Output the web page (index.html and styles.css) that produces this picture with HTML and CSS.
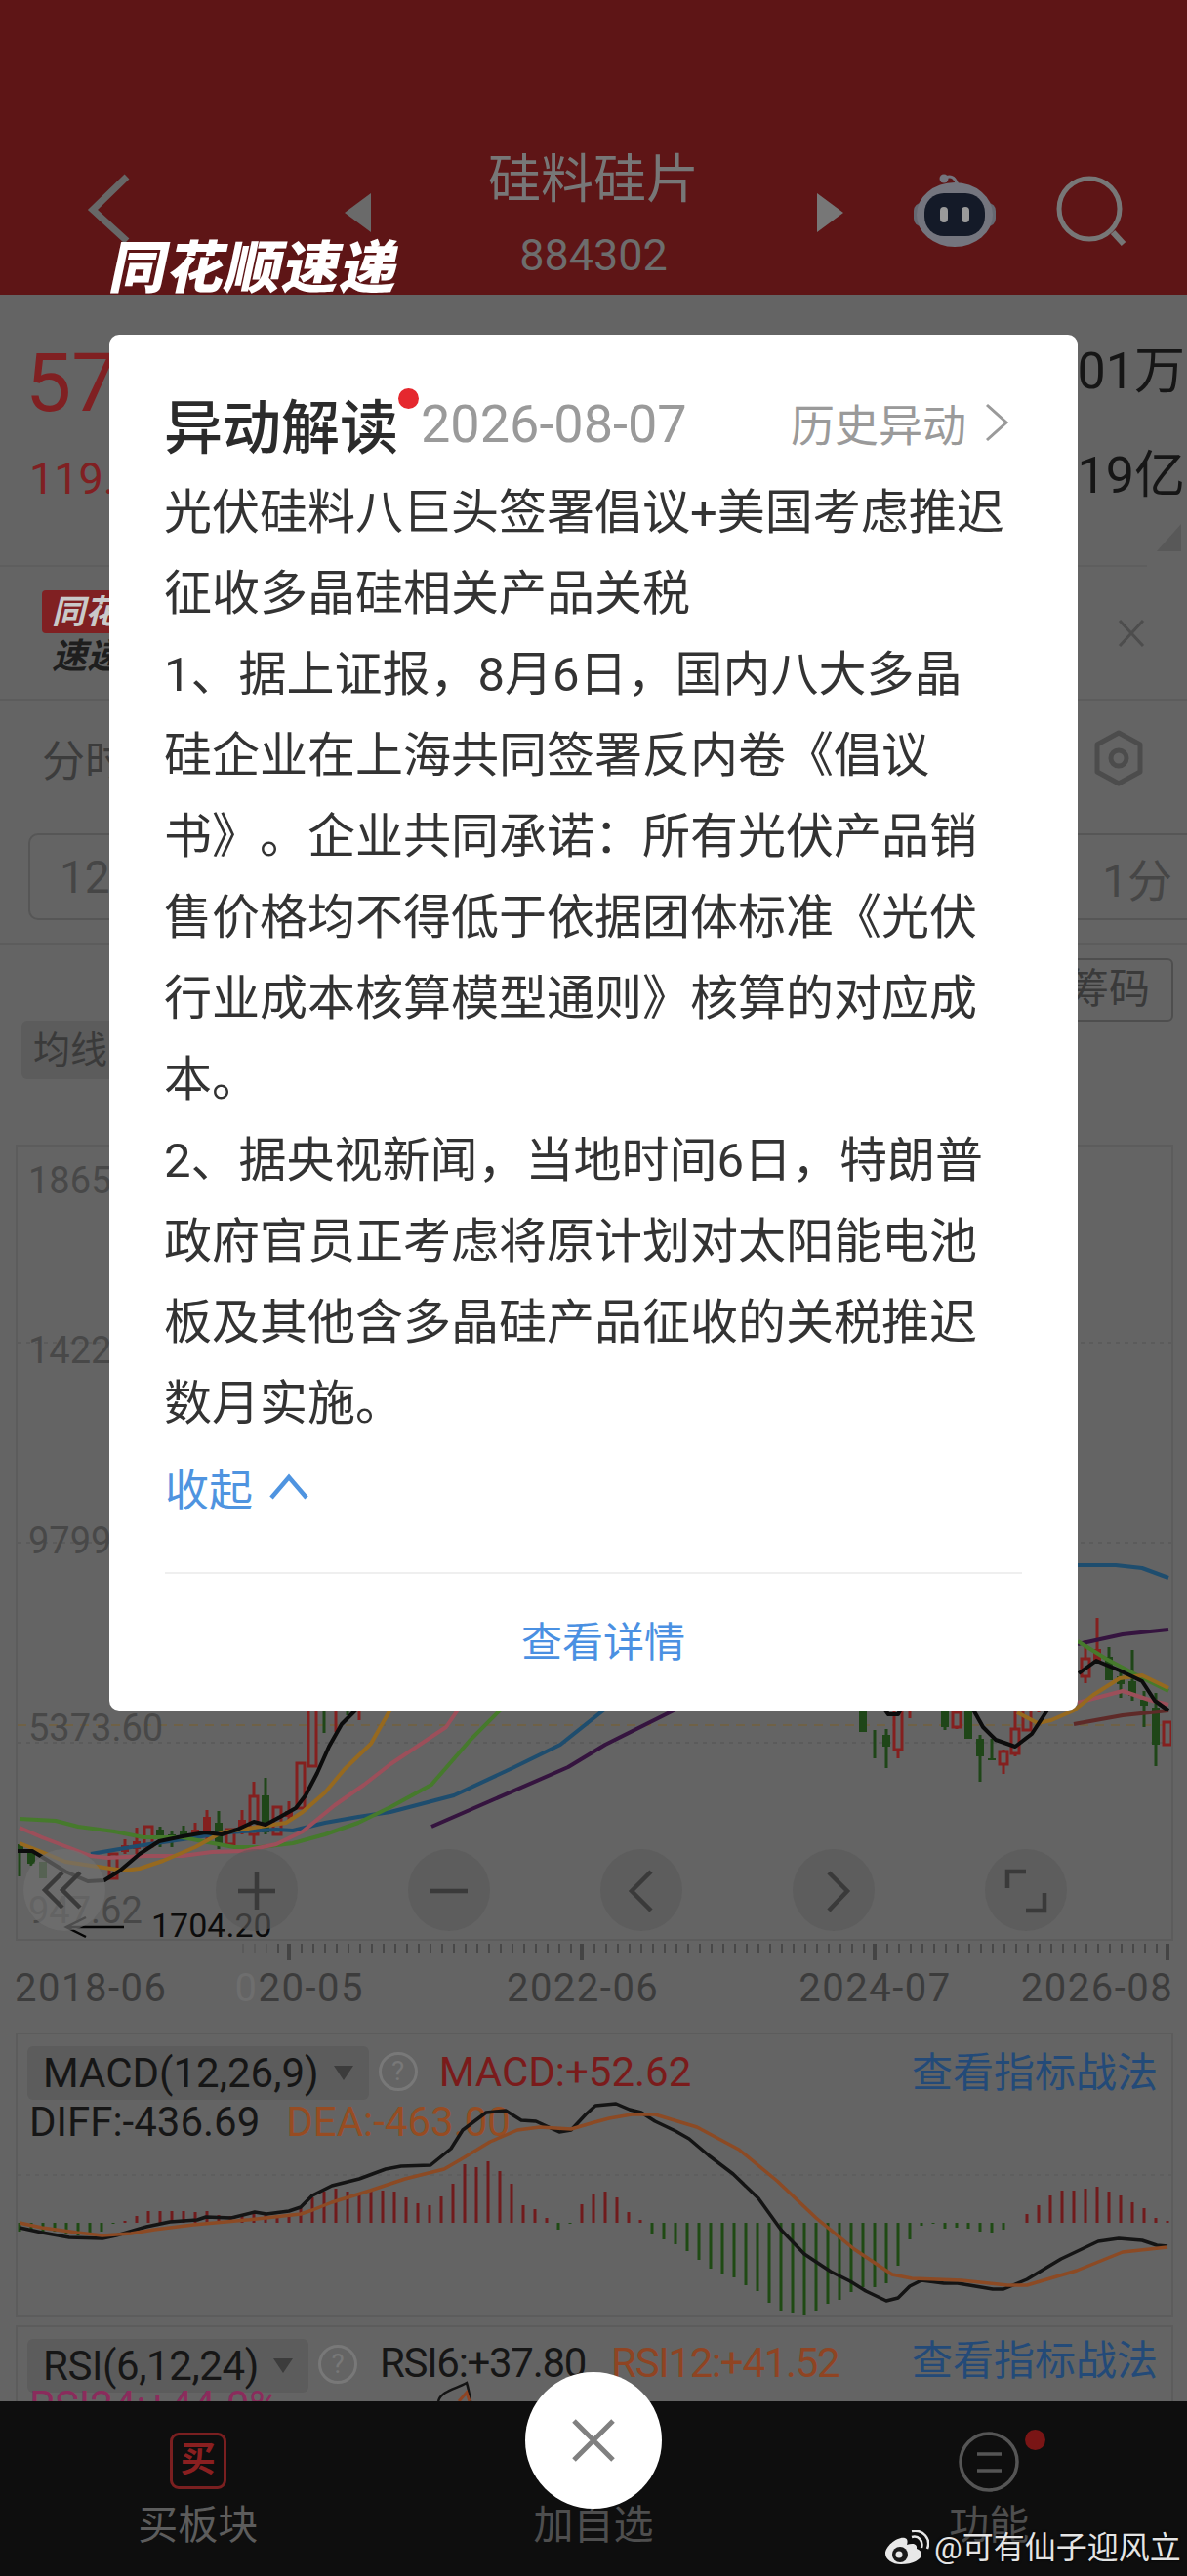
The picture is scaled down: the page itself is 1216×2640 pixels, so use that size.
FILE: index.html
```html
<!DOCTYPE html>
<html lang="zh-CN">
<head>
    <meta charset="UTF-8">
    <meta name="viewport" content="width=device-width, initial-scale=1.0">
    <title>硅料硅片 884302</title>
    <link rel="stylesheet" href="styles.css">
</head>
<body>
<div class="page">
    <!-- 顶部栏 -->
    <div class="top">
        <svg class="back" width="50" height="70" viewBox="0 0 50 70"><path d="M42 3 7 37l35 32" fill="none" stroke="#676767" stroke-width="7"/></svg>
        <svg class="tri" width="30" height="44" viewBox="0 0 30 44"><path d="M0 22 27 2v40z" fill="#6a6a6a"/></svg>
        <div class="stock">
            <div class="stock-name">硅料硅片</div>
            <div class="stock-code">884302</div>
        </div>
        <svg class="tri tri-next" width="30" height="44" viewBox="0 0 30 44"><path d="M2 2 29 22 2 42z" fill="#777"/></svg>
        <svg class="robot" width="90" height="78" viewBox="0 0 90 78">
            <path d="M36 4c6-3 10 1 12 8" fill="none" stroke="#74757e" stroke-width="3"/>
            <circle cx="34" cy="5" r="4.5" fill="#74757e"/>
            <rect x="3" y="30" width="84" height="24" rx="8" fill="#666871"/>
            <ellipse cx="45" cy="42" rx="39" ry="33" fill="#74757e"/>
            <rect x="14" y="20" width="62" height="44" rx="20" fill="#141a28"/>
            <rect x="30" y="34" width="8" height="16" rx="4" fill="#9a9a9a"/>
            <rect x="52" y="34" width="8" height="16" rx="4" fill="#9a9a9a"/>
        </svg>
        <svg class="search" width="78" height="78" viewBox="0 0 78 78"><circle cx="36" cy="36" r="31" fill="none" stroke="#777" stroke-width="5"/><path d="M60 60 71 72" stroke="#777" stroke-width="6"/></svg>
    </div>

    <!-- 行情 -->
    <div class="quote">
        <div class="quote-left">
            <div class="price">57</div>
            <div class="change">119.</div>
        </div>
        <div class="quote-right">
            <div class="vol">01万</div>
            <div class="vol vol-2">19亿</div>
        </div>
        <div class="corner"></div>
    </div>

    <div class="ad">
        <div class="ad-logo">
            <div class="ad-tag">同花</div>
            <div class="ad-sub">速递</div>
        </div>
        <svg width="28" height="30" viewBox="0 0 28 30"><path d="M2 2 26 28M26 2 2 28" stroke="#4d4d4d" stroke-width="3"/></svg>
    </div>

    <div class="tabs">
        <div class="tab">分时</div>
        <svg width="58" height="58" viewBox="0 0 58 58"><path d="M29 3 51 15v28L29 55 7 43V15z" fill="none" stroke="#4c4c4c" stroke-width="5" stroke-linejoin="round"/><circle cx="29" cy="29" r="8" fill="none" stroke="#4c4c4c" stroke-width="5"/></svg>
    </div>

    <div class="period">
        <span class="period-item">12</span>
        <span class="period-item period-last">1分</span>
    </div>

    <div class="tools">
        <div class="chip-ma">均线</div>
        <div class="btn-chip">筹码</div>
    </div>

    <!-- K线 -->
    <div class="chart">
        <svg class="plot" width="1182" height="812" viewBox="18 1175 1182 812">
            <g class="grid">
                <path d="M18 1376H1200M18 1581H1200M18 1786H1200"/>
            </g>
            <path d="M18 1768H1200" class="grid-mid"/>
            <g class="axis-label">
                <text x="29" y="1223">1865</text>
                <text x="29" y="1397">1422</text>
                <text x="29" y="1592">9799</text>
                <text x="29" y="1784">5373.60</text>
                <text x="29" y="1971">947.62</text>
            </g>
            <path class="wick-r" d="M128 1885v15M140 1873v27M200 1868v17M212 1855v30M236 1876v16M248 1855v25M260 1826v64M296 1846v19M344 1745v30M368 1745v18M920 1745v57M932 1745v16M980 1745v27M1028 1793v25M1040 1745v55M1064 1745v10M1112 1681v44M1124 1658v47"/>
            <path class="body-r" d="M124 1891h8v7h-8zM136 1887h8v8h-8zM196 1875h8v8h-8zM208 1862h8v20h-8zM244 1865h8v13h-8zM292 1856h8v6h-8zM1120 1690h8v12h-8z"/>
            <path class="hollow-r" d="M112 1900h8v25h-8zM148 1872h8v20h-8zM232 1875h8v15h-8zM256 1841h8v39h-8zM280 1852h8v28h-8zM304 1807h8v46h-8zM316 1745h8v65h-8zM916 1745h8v48h-8zM976 1755h8v15h-8zM1024 1795h8v13h-8zM1036 1772h8v25h-8zM1048 1745h8v28h-8zM1108 1700h8v18h-8zM1192 1765h8v23h-8z"/>
            <path class="wick-g" d="M20 1890v33M32 1897v15M164 1872v21M176 1877v16M188 1871v14M224 1856v39M272 1822v58M332 1745v31M356 1745v13M896 1773v29M908 1772v40M968 1745v28M1004 1778v48M1016 1782v22M1136 1688v34M1148 1712v28M1160 1691v52M1172 1733v37M1184 1735v75"/>
            <path class="body-g" d="M16 1890h8v7h-8zM28 1897h8v13h-8zM40 1908h8v17h-8zM160 1875h8v7h-8zM172 1880h8v6h-8zM184 1877h8v6h-8zM220 1868h8v22h-8zM268 1840h8v38h-8zM880 1745h8v30h-8zM904 1778h8v12h-8zM964 1745h8v25h-8zM988 1745h8v37h-8zM1000 1782h8v18h-8zM1012 1802h8v2h-8zM1132 1698h8v24h-8zM1144 1718h8v8h-8zM1156 1723h8v15h-8zM1168 1742h8v6h-8zM1180 1750h8v38h-8z"/>
            <g class="lines">
                <path stroke="#35143f" d="M442 1872 582 1811 620 1788 706 1745M1104 1685 1150 1675 1197 1670"/>
                <path stroke="#5e2a28" d="M1100 1767 1150 1758 1197 1753"/>
                <path stroke="#1e4d6e" d="M93 1900 140 1892 187 1885 233 1878 283 1875 300 1876 333 1868 367 1862 400 1857 465 1840 527 1811 574 1788 628 1745M1104 1604 1143 1604 1170 1607 1197 1617"/>
                <path stroke="#467a2c" d="M20 1864 57 1866 80 1872 117 1877 147 1883 187 1883 213 1888 240 1893 267 1893 300 1889 333 1880 367 1868 400 1852 442 1829 481 1784 520 1745M1104 1682 1133 1700 1167 1718 1197 1733"/>
                <path stroke="#9c4f5a" d="M20 1873 43 1883 93 1902 110 1904 150 1902 187 1902 217 1898 250 1897 283 1890 310 1877 343 1850 373 1829 400 1808 457 1770 474 1745M1104 1745 1150 1733 1177 1742 1197 1747"/>
                <path stroke="#96691f" d="M20 1889 43 1898 67 1908 100 1913 127 1917 143 1915 167 1907 200 1893 227 1878 260 1873 293 1868 310 1857 333 1837 353 1813 380 1787 404 1745M1042 1755 1063 1766 1077 1763 1100 1753 1120 1737 1147 1720 1170 1717 1197 1730"/>
                <path stroke="#0c0c0c" d="M18 1897 33 1897 43 1903 67 1918 90 1928 107 1927 123 1917 143 1900 163 1887 187 1882 210 1878 227 1880 243 1875 260 1867 272 1870 287 1862 303 1853 313 1840 325 1817 337 1790 350 1767 372 1745M905 1750 910 1757 920 1757 924 1750M993 1745 1007 1770 1020 1783 1040 1790 1057 1777 1078 1745M1105 1715 1123 1702 1147 1712 1170 1723 1183 1743 1197 1753"/>
            </g>
            <path d="M127 1975H68M88 1965 68 1975 88 1985" fill="none" stroke="#050505" stroke-width="2.5"/>
            <text class="cursor-val" x="155" y="1985">1704.20</text>
            <circle class="ctl ctl-first" cx="66" cy="1937" r="42"/>
            <circle class="ctl" cx="263" cy="1937" r="42"/>
            <circle class="ctl" cx="460" cy="1937" r="42"/>
            <circle class="ctl" cx="657" cy="1937" r="42"/>
            <circle class="ctl" cx="854" cy="1937" r="42"/>
            <circle class="ctl" cx="1051" cy="1937" r="42"/>
            <g class="ctl-icon">
                <path d="M64 1919 46 1937 64 1955M82 1919 64 1937 82 1955"/>
                <path d="M263 1919v38M244 1938h38"/>
                <path d="M441 1938h38"/>
                <path d="M667 1918 647 1938 667 1958"/>
                <path d="M849 1919 868 1938 849 1958"/>
                <path d="M1032 1935v-17h19M1070 1940v18h-19"/>
            </g>
        </svg>
    </div>

    <svg class="ticks" width="1216" height="17" viewBox="0 1992 1216 17">
        <path d="M248 1997H284" stroke="#5a5a5a" stroke-width="10" stroke-dasharray="2 10"/>
        <path d="M284 1997H1200" stroke="#484848" stroke-width="10" stroke-dasharray="2 10"/>
        <path d="M296 1992v17M596 1992v17M896 1992v17M1196 1992v17" stroke="#444" stroke-width="4"/>
    </svg>
    <div class="dates">
        <span>2018-06</span>
        <span class="d2"><i class="fade">0</i>20-05</span>
        <span class="d3">2022-06</span>
        <span class="d4">2024-07</span>
        <span class="d5">2026-08</span>
    </div>

    <!-- MACD -->
    <div class="panel panel-macd">
        <div class="panel-head">
            <div class="ind-chip">MACD(12,26,9)<i class="caret"></i></div>
            <div class="help">?</div>
            <div class="val val-red">MACD:+52.62</div>
            <div class="link">查看指标战法</div>
        </div>
        <div class="panel-sub">
            <span class="val">DIFF:-436.69</span>
            <span class="val val-orange">DEA:-463.00</span>
        </div>
        <svg class="plot" width="1182" height="288" viewBox="18 2085 1182 288">
            <path d="M18 2229H1200" stroke="#5c5c5c" stroke-width="1.5" stroke-dasharray="4 5"/>
            <path class="bar-r" d="M128 2278v-2M140 2278v-7M152 2278v-12M164 2278v-12M176 2278v-12M188 2278v-12M200 2278v-11M212 2278v-12M224 2278v-8M236 2278v-7M248 2278v-8M260 2278v-12M272 2278v-8M284 2278v-8M296 2278v-9M308 2278v-15M320 2278v-26M332 2278v-32M344 2278v-35M356 2278v-32M368 2278v-30M380 2278v-33M392 2278v-33M404 2278v-32M416 2278v-26M428 2278v-20M440 2278v-18M452 2278v-27M464 2278v-40M476 2278v-60M488 2278v-57M500 2278v-63M512 2278v-53M524 2278v-40M536 2278v-18M548 2278v-14M560 2278v-5M596 2278v-19M608 2278v-30M620 2278v-32M632 2278v-26M644 2278v-11M656 2278v-3M1052 2278v-9M1064 2278v-18M1076 2278v-28M1088 2278v-33M1100 2278v-33M1112 2278v-35M1124 2278v-37M1136 2278v-32M1148 2278v-28M1160 2278v-21M1172 2278v-15M1184 2278v-5M1196 2278v-2"/>
            <path class="bar-g" d="M20 2278v9M32 2278v6M44 2278v9M56 2278v9M68 2278v12M80 2278v13M92 2278v12M104 2278v9M116 2278v1M572 2278v7M584 2278v1M668 2278v12M680 2278v17M692 2278v22M704 2278v29M716 2278v38M728 2278v47M740 2278v52M752 2278v56M764 2278v64M776 2278v70M788 2278v82M800 2278v90M812 2278v92M824 2278v97M836 2278v90M848 2278v83M860 2278v79M872 2278v71M884 2278v66M896 2278v66M908 2278v62M920 2278v44M932 2278v17M944 2278v3M956 2278v1M968 2278v6M980 2278v5M992 2278v6M1004 2278v9M1016 2278v10M1028 2278v7"/>
            <path class="line-b" d="M20 2283 43 2288 71 2293 105 2294 119 2291 150 2282 174 2277 202 2275 211 2272 237 2273 261 2267 273 2269 296 2266 308 2262 320 2250 340 2240 368 2233 395 2223 411 2220 441 2219 462 2202 474 2183 498 2165 518 2163 534 2173 549 2174 573 2185 585 2183 600 2167 610 2158 631 2156 645 2162 657 2165 671 2174 692 2184 706 2192 726 2209 751 2228 777 2253 800 2285 824 2310 851 2328 871 2338 887 2348 908 2358 920 2355 932 2343 944 2337 967 2340 981 2340 1017 2346 1028 2346 1052 2336 1087 2315 1125 2297 1146 2294 1170 2296 1185 2301 1196 2302"/>
            <path class="line-o" d="M20 2278 43 2283 79 2288 105 2291 134 2289 158 2285 198 2280 253 2275 308 2269 320 2265 340 2257 379 2245 415 2233 455 2223 474 2212 502 2195 530 2183 553 2180 585 2182 609 2175 624 2171 647 2167 671 2167 714 2180 757 2203 796 2235 836 2273 875 2305 914 2331 934 2335 985 2337 1032 2342 1052 2342 1103 2327 1150 2308 1196 2303"/>
        </svg>
    </div>

    <!-- RSI -->
    <div class="panel panel-rsi">
        <div class="panel-head">
            <div class="ind-chip">RSI(6,12,24)<i class="caret"></i></div>
            <div class="help">?</div>
            <div class="val val-rsi">RSI6:+37.80</div>
            <div class="val val-rsi val-orange">RSI12:+41.52</div>
            <div class="link">查看指标战法</div>
        </div>
        <div class="val rsi-third">RSI24:+44.0%</div>
        <svg class="plot" width="1182" height="76" viewBox="18 2385 1182 76">
            <path class="line-thin" d="M449 2461C452 2450 468 2448 478 2442 480 2448 481 2455 482 2461"/>
            <path d="M470 2461 478 2452 481 2461" fill="none" stroke="#8f4423" stroke-width="3"/>
        </svg>
    </div>

    <!-- 底部栏 -->
    <div class="bottom">
        <div class="bottom-item">
            <div class="buy-icon">买</div>
            <div class="bottom-text">买板块</div>
        </div>
        <div class="bottom-item">
            <div class="icon-slot"></div>
            <div class="bottom-text bottom-dim">加自选</div>
        </div>
        <div class="bottom-item">
            <div class="icon-slot func-slot">
                <svg width="64" height="64" viewBox="0 0 64 64"><circle cx="32" cy="32" r="29" fill="none" stroke="#555" stroke-width="3.5"/><path d="M20 24H45M20 41H45" stroke="#555" stroke-width="3.5"/></svg>
                <i class="func-dot"></i>
            </div>
            <div class="bottom-text bottom-dim">功能</div>
        </div>
    </div>

    <!-- 速递水印 -->
    <div class="brand">同花顺速递</div>

    <!-- 异动解读弹窗 -->
    <div class="modal">
        <div class="modal-head">
            <div class="modal-title">异动解读<i class="red-dot"></i></div>
            <div class="modal-date">2026-08-07</div>
            <div class="modal-history">历史异动
                <svg width="26" height="40" viewBox="0 0 26 40"><path d="M3 2 23 20 3 38" fill="none" stroke="#9a9a9a" stroke-width="3"/></svg>
            </div>
        </div>
        <p class="modal-body">光伏硅料八巨头签署倡议+美国考虑推迟<br>征收多晶硅相关产品关税<br>1、据上证报，8月6日，国内八大多晶<br>硅企业在上海共同签署反内卷《倡议<br>书》。企业共同承诺：所有光伏产品销<br>售价格均不得低于依据团体标准《光伏<br>行业成本核算模型通则》核算的对应成<br>本。<br>2、据央视新闻，当地时间6日，特朗普<br>政府官员正考虑将原计划对太阳能电池<br>板及其他含多晶硅产品征收的关税推迟<br>数月实施。</p>
        <div class="modal-fold">收起
            <svg width="42" height="28" viewBox="0 0 42 28"><path d="M3 25 21 4 39 25" fill="none" stroke="#4f94e0" stroke-width="4.5"/></svg>
        </div>
        <div class="modal-line"></div>
        <div class="modal-more">查看详情</div>
    </div>

    <div class="close-btn">
        <svg width="44" height="44" viewBox="0 0 44 44"><path d="M2 2 42 42M42 2 2 42" stroke="#808080" stroke-width="5"/></svg>
    </div>

    <div class="weibo">
        <svg width="46" height="36" viewBox="0 0 46 36">
            <path d="M17 35C8 35 1 30 1 24 1 16 14 6 21 8c3 1 3 4 2 7 6-2 11-1 10 4 3 1 5 3 5 6 0 5-9 10-21 10z" fill="#e8e8e8"/>
            <circle cx="16" cy="25" r="8" fill="#1a1a1a"/>
            <circle cx="15" cy="25" r="3.5" fill="#e8e8e8"/>
            <path d="M28 7c7-2 12 4 10 11M28 1c12-2 20 8 16 18" fill="none" stroke="#e8e8e8" stroke-width="2.5"/>
        </svg>
        <span>@可有仙子迎风立</span>
    </div>
</div>
</body>
</html>
```

FILE: styles.css
```css
* {
    margin: 0;
    padding: 0;
    box-sizing: border-box;
}
body {
    background: #646464;
    font-family: Roboto, "Noto Sans CJK SC", sans-serif;
}
i {
    font-style: normal;
}
.page {
    position: relative;
    width: 1216px;
    height: 2640px;
    overflow: hidden;
    background: #646464;
}

/* top */
.top {
    display: flex;
    align-items: flex-start;
    height: 302px;
    padding: 144px 0 0 88px;
    background: #5e1516;
}
.back {
    margin-top: 34px;
}
.tri {
    margin: 52px 0 0 215px;
}
.tri-next {
    margin-left: 2px;
}
.stock {
    width: 450px;
    padding-top: 2px;
    text-align: center;
}
.stock-name {
    font-size: 54px;
    line-height: 78px;
    color: #777;
}
.stock-code {
    font-size: 45px;
    line-height: 76px;
    color: #6d6d6d;
}
.robot {
    margin: 34px 0 0 68px;
}
.search {
    margin: 34px 0 0 57px;
}

/* quote */
.quote {
    position: relative;
    display: flex;
    justify-content: space-between;
    height: 279px;
    margin: 0 41px 0 0;
    padding: 41px 0 0 26px;
    border-bottom: 2px solid #5e5e5e;
}
.price {
    font-size: 84px;
    line-height: 100px;
    color: #802022;
}
.change {
    margin: 23px 0 0 4px;
    font-size: 45px;
    line-height: 50px;
    color: #802022;
}
.quote-right {
    margin-right: -39px;
    padding-top: 8px;
}
.vol {
    font-size: 52px;
    line-height: 60px;
    color: #161616;
}
.vol-2 {
    margin-top: 47px;
}
.corner {
    position: absolute;
    right: -35px;
    top: 235px;
    width: 0;
    height: 0;
    border-left: 25px solid transparent;
    border-bottom: 28px solid #585858;
}

/* ad */
.ad {
    display: flex;
    align-items: center;
    justify-content: space-between;
    height: 137px;
    padding: 0 43px;
    border-bottom: 2px solid #5c5c5c;
}
.ad-logo {
    width: 140px;
}
.ad-tag {
    position: relative;
    height: 44px;
    padding-left: 10px;
    background: #802022;
    border-radius: 4px;
    font-size: 34px;
    line-height: 44px;
    font-weight: 700;
    font-style: italic;
    color: #c9c9c9;
}
.ad-sub {
    padding-left: 10px;
    margin-top: 4px;
    font-size: 36px;
    line-height: 40px;
    font-weight: 700;
    font-style: italic;
    color: #1e1e1e;
}

/* tabs */
.tabs {
    display: flex;
    align-items: center;
    justify-content: space-between;
    height: 136px;
    padding: 0 41px 18px 43px;
}
.tab {
    font-size: 44px;
    color: #3c3c3c;
}
.period {
    display: flex;
    align-items: center;
    justify-content: space-between;
    height: 89px;
    margin: 0 -10px 23px 29px;
    padding: 0 23px 0 30px;
    border: 2px solid #565656;
    border-radius: 10px;
}
.period-item {
    font-size: 46px;
    color: #464646;
}
.tools {
    display: flex;
    justify-content: space-between;
    height: 207px;
    padding: 14px 14px 0 22px;
    border-top: 2px solid #5c5c5c;
}
.chip-ma {
    height: 60px;
    margin-top: 64px;
    padding: 0 20px 0 12px;
    background: #5c5c5c;
    border-radius: 6px;
    font-size: 38px;
    line-height: 60px;
    color: #3a3a3a;
}
.btn-chip {
    height: 65px;
    padding: 0 22px;
    border: 2px solid #4e4e4e;
    border-radius: 6px;
    font-size: 42px;
    line-height: 60px;
    color: #3a3a3a;
}

/* kline */
.chart {
    position: relative;
    width: 1186px;
    height: 816px;
    margin-left: 16px;
    border: 2px solid #5c5c5c;
}
.plot {
    position: absolute;
    left: 0;
    top: 0;
}
.grid path {
    fill: none;
    stroke: #585858;
    stroke-width: 1.5;
    stroke-dasharray: 4 5;
}
.grid-mid {
    fill: none;
    stroke: #6f6146;
    stroke-width: 2;
    stroke-dasharray: 9 7;
}
.axis-label text {
    font-size: 38px;
    fill: #484848;
}
.wick-r {
    fill: none;
    stroke: #84201f;
    stroke-width: 3;
}
.body-r {
    fill: #84201f;
}
.hollow-r {
    fill: #646464;
    stroke: #84201f;
    stroke-width: 3;
}
.wick-g {
    fill: none;
    stroke: #1f4618;
    stroke-width: 3;
}
.body-g {
    fill: #1f4618;
}
.lines path {
    fill: none;
    stroke-width: 4;
    stroke-linejoin: round;
}
.cursor-val {
    font-size: 34px;
    fill: #0c0c0c;
}
.ctl {
    fill: rgba(88, 88, 88, .62);
}
.ctl-first {
    fill: rgba(112, 112, 112, .68);
}
.ctl-icon path {
    fill: none;
    stroke: #3a3a3a;
    stroke-width: 4.5;
}
.ticks {
    display: block;
    margin-top: 3px;
}
.dates {
    display: flex;
    height: 44px;
    margin: 7px 0 23px;
    padding-left: 15px;
    font-size: 40px;
    line-height: 44px;
    letter-spacing: 1.5px;
    color: #3c3c3c;
}
.dates span {
    flex: none;
    white-space: nowrap;
}
.d2 {
    margin-left: 69px;
}
.d3 {
    margin-left: 146px;
}
.d4 {
    margin-left: 143px;
}
.d5 {
    margin-left: 71px;
}
.fade {
    color: #6e6e6e;
}

/* macd, rsi */
.panel {
    position: relative;
    width: 1186px;
    margin-left: 16px;
    border: 2px solid #5c5c5c;
    overflow: hidden;
}
.panel-macd {
    height: 292px;
    margin-bottom: 8px;
}
.panel-rsi {
    height: 80px;
    border-bottom: 0;
    margin-bottom: -2px;
}
.panel-head {
    display: flex;
    align-items: flex-start;
    padding: 12px 14px 0 10px;
    font-size: 42px;
}
.ind-chip {
    display: flex;
    align-items: center;
    height: 55px;
    padding: 0 16px;
    background: #5c5c5c;
    border-radius: 6px;
    font-size: 42px;
    color: #161616;
}
.panel-rsi .ind-chip {
    letter-spacing: -.4px;
}
.caret {
    width: 0;
    height: 0;
    margin-left: 15px;
    border-left: 10px solid transparent;
    border-right: 10px solid transparent;
    border-top: 15px solid #3c3c3c;
}
.help {
    width: 40px;
    height: 40px;
    margin: 6px 0 0 10px;
    border: 3px solid #787878;
    border-radius: 50%;
    font-size: 28px;
    line-height: 34px;
    text-align: center;
    color: #787878;
}
.val {
    font-size: 42px;
    line-height: 50px;
    color: #161616;
    white-space: nowrap;
}
.val-red {
    margin: 2px 0 0 22px;
    color: #7a1b1b;
}
.val-orange {
    margin-left: 23px;
    color: #974c22;
}
.panel-sub {
    margin-top: -2px;
    padding-left: 12px;
    line-height: 40px;
}
.link {
    margin: 3px 0 0 auto;
    font-size: 42px;
    line-height: 50px;
    color: #234a78;
}
.bar-r {
    fill: none;
    stroke: #701b1c;
    stroke-width: 3;
}
.bar-g {
    fill: none;
    stroke: #1f4a14;
    stroke-width: 3;
}
.line-b {
    fill: none;
    stroke: #141414;
    stroke-width: 3.5;
    stroke-linejoin: round;
}
.line-o {
    fill: none;
    stroke: #8c4a24;
    stroke-width: 3.5;
    stroke-linejoin: round;
}
.line-thin {
    fill: none;
    stroke: #141414;
    stroke-width: 2.5;
}
.val-rsi {
    margin: 5px 0 0 23px;
    line-height: 40px;
    letter-spacing: -1.3px;
}
.val-rsi.val-orange {
    margin-left: 26px;
    color: #8f4423;
}
.panel-rsi .link {
    margin-top: 3px;
    line-height: 40px;
}
.rsi-third {
    margin: -11px 0 0 12px;
    color: #8a2c5c;
}

/* bottom */
.bottom {
    position: relative;
    display: grid;
    grid-template-columns: repeat(3, 1fr);
    height: 179px;
    background: #0e0e0e;
}
.bottom-item {
    display: flex;
    flex-direction: column;
    align-items: center;
    padding-top: 30px;
}
.icon-slot {
    height: 62px;
}
.func-slot {
    position: relative;
}
.func-dot {
    position: absolute;
    left: 69px;
    top: -1px;
    width: 21px;
    height: 21px;
    border-radius: 50%;
    background: #7a1515;
}
.buy-icon {
    width: 58px;
    height: 58px;
    margin: 2px 0;
    border: 3px solid #7a1f20;
    border-radius: 9px;
    font-size: 36px;
    line-height: 50px;
    font-weight: 700;
    text-align: center;
    color: #8a1f20;
}
.bottom-text {
    margin-top: 10px;
    font-size: 41px;
    line-height: 50px;
    color: #5c5c5c;
}
.bottom-dim {
    color: #4e4e4e;
}

/* overlays */
.brand {
    position: absolute;
    left: 108px;
    top: 244px;
    font-size: 58px;
    line-height: 62px;
    font-weight: 900;
    letter-spacing: 1px;
    color: #fff;
    transform: skewX(-12deg);
    transform-origin: left bottom;
}
.modal {
    position: absolute;
    left: 112px;
    top: 343px;
    width: 992px;
    height: 1410px;
    padding: 50px 57px 0;
    background: #fff;
    border-radius: 10px;
}
.modal-head {
    display: flex;
    align-items: center;
    height: 80px;
}
.modal-title {
    position: relative;
    font-size: 60px;
    font-weight: 500;
    margin-left: -1px;
    color: #2b2b2b;
}
.red-dot {
    position: absolute;
    right: -21px;
    top: 8px;
    width: 21px;
    height: 21px;
    border-radius: 50%;
    background: #e5282e;
}
.modal-date {
    margin: 3px 0 0 23px;
    font-size: 54px;
    color: #9a9a9a;
}
.modal-history {
    display: flex;
    align-items: center;
    gap: 18px;
    margin: 0 13px 0 auto;
    font-size: 45px;
    color: #9a9a9a;
}
.modal-body {
    margin: 11px -30px 0 -1px;
    font-size: 49px;
    line-height: 83px;
    white-space: nowrap;
    text-spacing-trim: space-all;
    color: #333;
}
.modal-fold {
    display: flex;
    align-items: center;
    gap: 16px;
    height: 60px;
    margin-top: 14px;
    font-size: 45px;
    color: #4f94e0;
}
.modal-line {
    height: 2px;
    margin-top: 57px;
    background: #efefef;
}
.modal-more {
    margin-top: 46px;
    padding-left: 20px;
    font-size: 42px;
    line-height: 50px;
    text-align: center;
    color: #4a90e2;
}
.close-btn {
    position: absolute;
    left: 538px;
    top: 2431px;
    display: flex;
    align-items: center;
    justify-content: center;
    width: 140px;
    height: 140px;
    border-radius: 50%;
    background: #fff;
}
.weibo {
    position: absolute;
    left: 906px;
    top: 2592px;
    display: flex;
    align-items: center;
    gap: 5px;
    font-size: 32px;
    line-height: 38px;
    color: #e4e4e4;
    text-shadow: 0 0 3px #000;
    white-space: nowrap;
}
```
